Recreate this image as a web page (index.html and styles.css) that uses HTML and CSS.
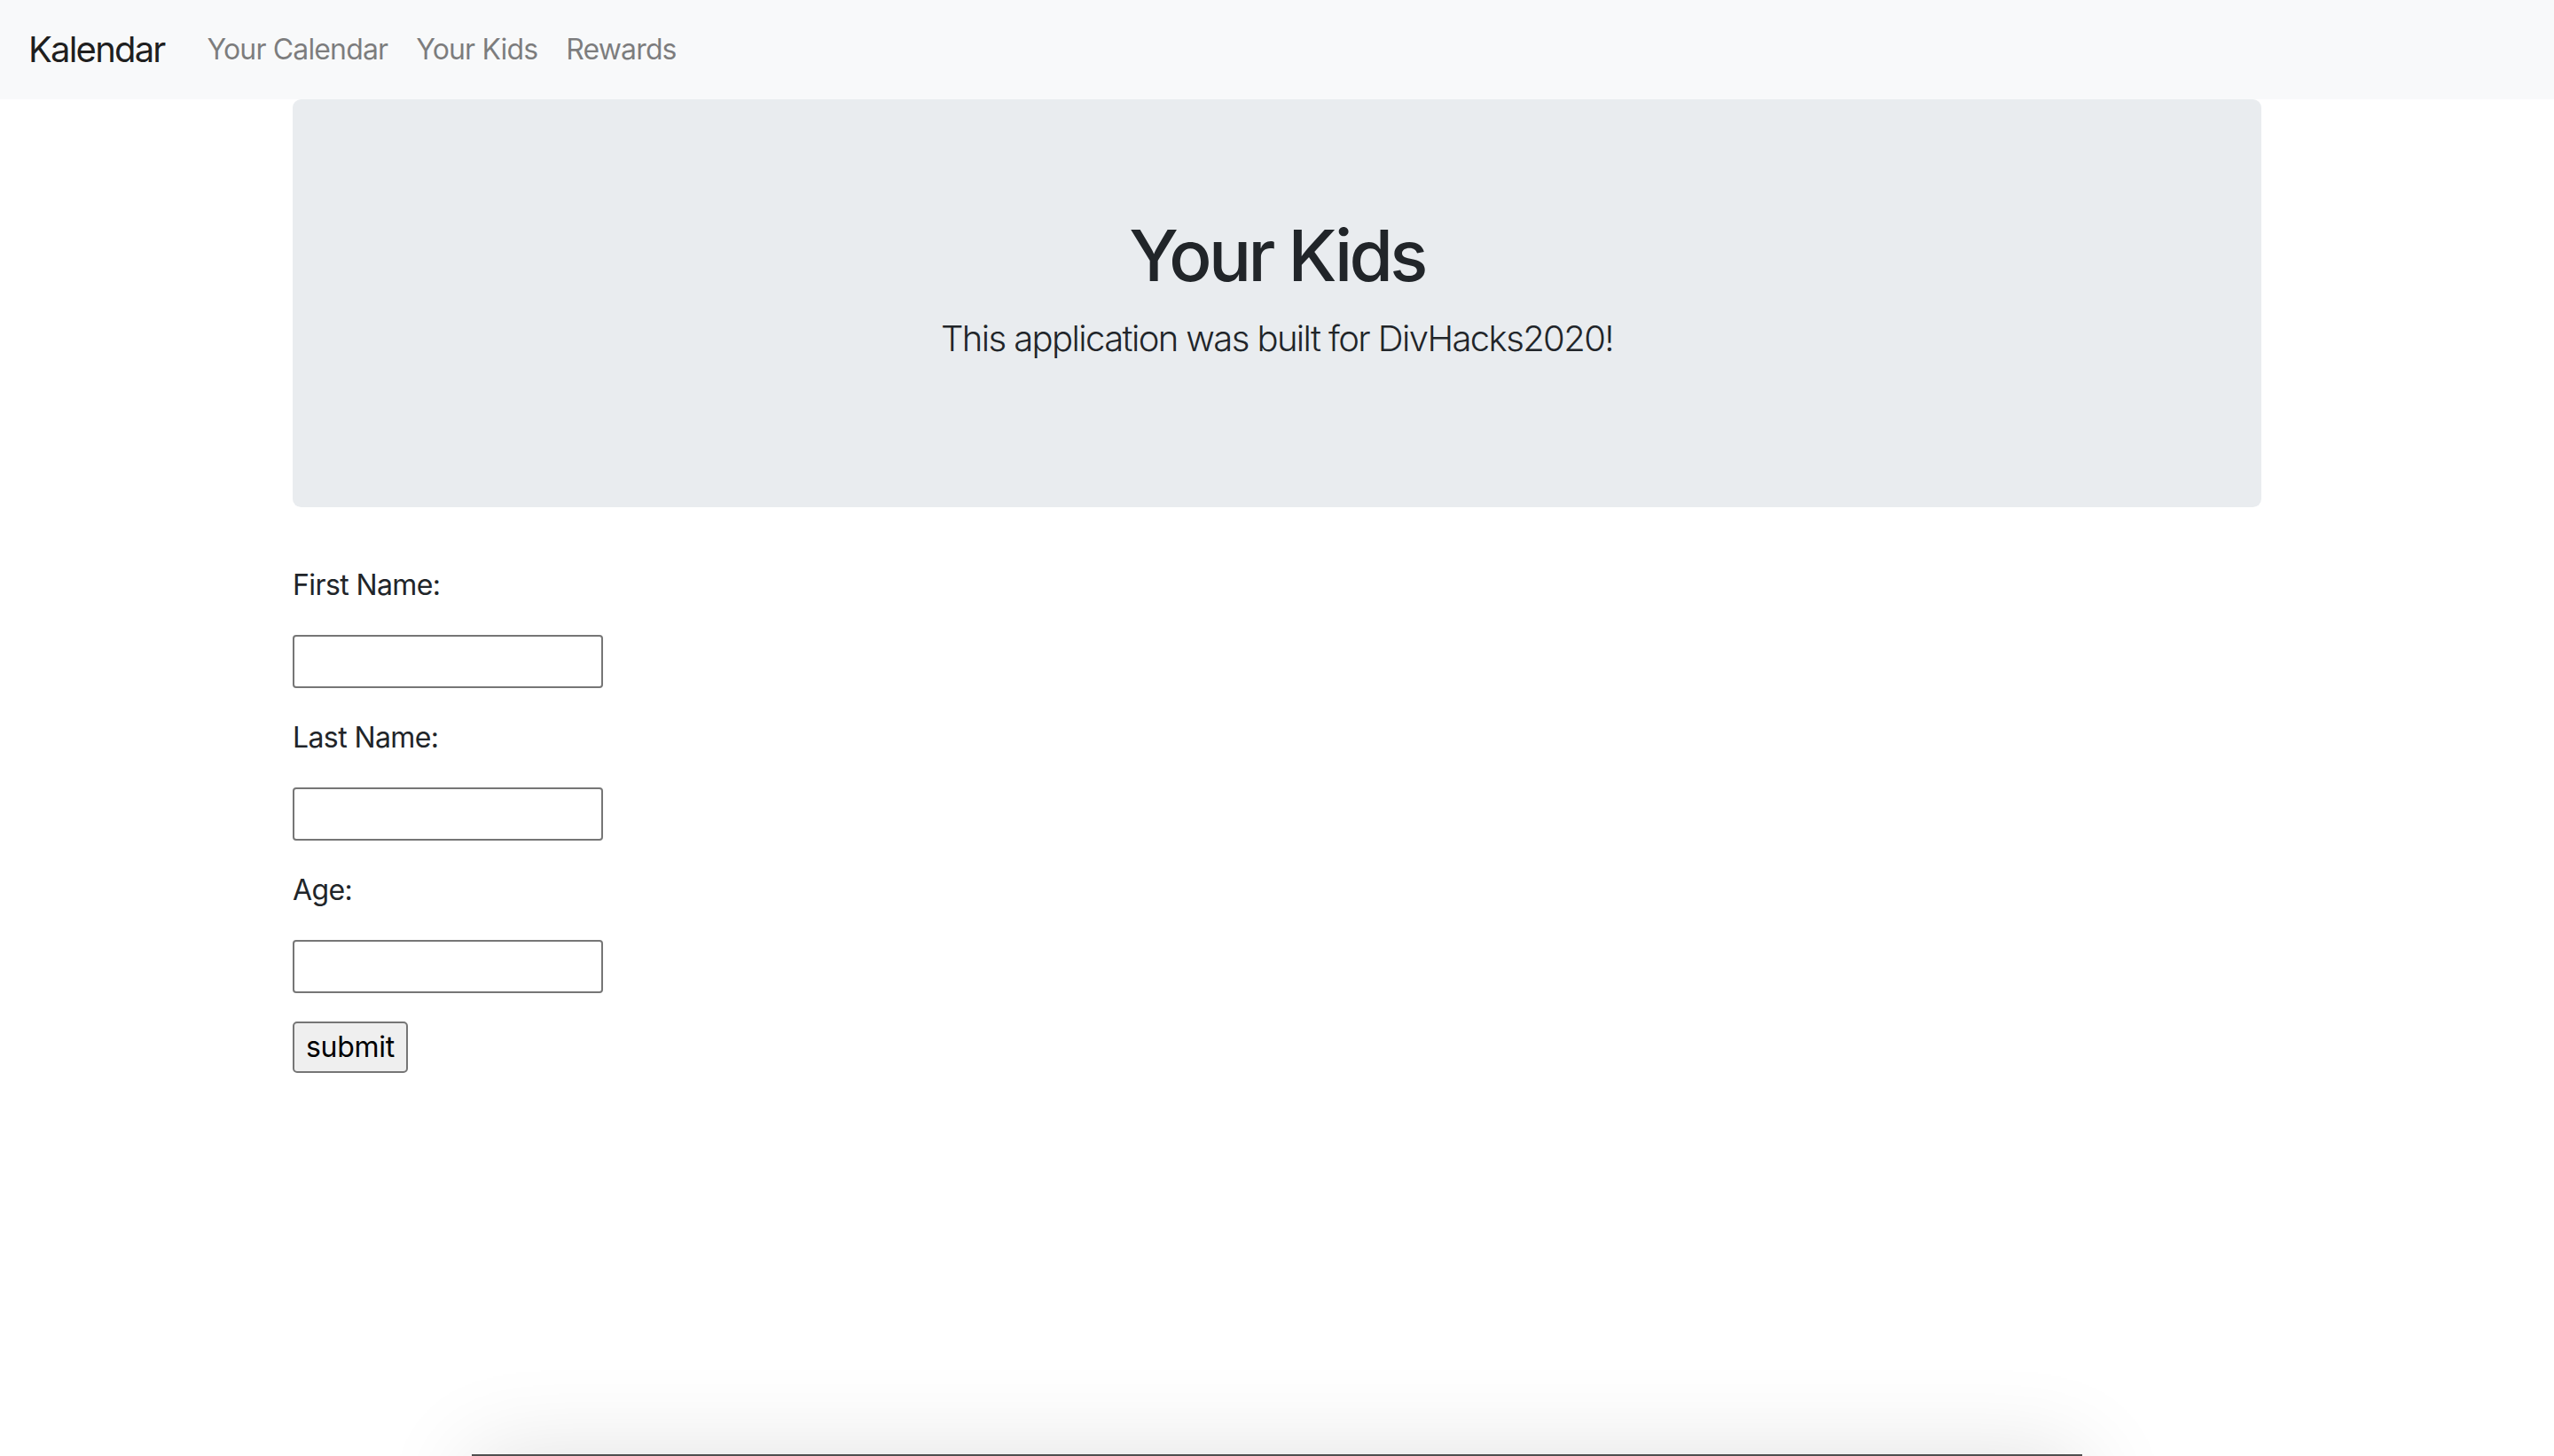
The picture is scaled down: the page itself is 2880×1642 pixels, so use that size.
FILE: index.html
```html
<!DOCTYPE html>
<html lang="en">
<head>
<meta charset="utf-8">
<title>Kalendar</title>
<link rel="stylesheet" href="styles.css">
</head>
<body>
<div class="page">
  <nav class="navbar">
    <a class="brand" href="#">Kalendar</a>
    <ul class="nav-links">
      <li><a class="nav-link" href="#">Your Calendar</a></li>
      <li><a class="nav-link" href="#">Your Kids</a></li>
      <li><a class="nav-link" href="#">Rewards</a></li>
    </ul>
  </nav>
  <main class="container">
    <section class="jumbotron">
      <h1 class="title">Your Kids</h1>
      <p class="lead">This application was built for DivHacks2020!</p>
    </section>
    <form class="kid-form">
      <label class="field-label" for="first">First Name:</label>
      <input class="field-input" id="first" type="text">
      <label class="field-label" for="last">Last Name:</label>
      <input class="field-input" id="last" type="text">
      <label class="field-label" for="age">Age:</label>
      <input class="field-input" id="age" type="text">
      <button class="submit-btn" type="button">submit</button>
    </form>
  </main>
  <div class="sheet"></div>
</div>
</body>
</html>
```

FILE: styles.css
```css
html, body {
  margin: 0;
  padding: 0;
}

body {
  font-family: Inter, "Noto Sans", "Liberation Sans", sans-serif;
  font-size: 32px;
  line-height: 1.5;
  color: #212529;
  background: #ffffff;
}

.page {
  display: flex;
  flex-direction: column;
  height: 100vh;
  overflow: hidden;
}

.navbar {
  flex-shrink: 0;
  display: flex;
  align-items: center;
  background: #f8f9fa;
  padding: 16px 32px;
}

.brand {
  font-size: 40px;
  line-height: 60px;
  padding: 10px 0;
  margin-right: 32px;
  color: rgba(0, 0, 0, 0.9);
  text-decoration: none;
  letter-spacing: -1.8px;
}

.nav-links {
  display: flex;
  list-style: none;
  margin: 0;
  padding: 0;
}

.nav-link {
  display: block;
  padding: 16px 16px;
  font-size: 32px;
  line-height: 48px;
  color: rgba(0, 0, 0, 0.5);
  text-decoration: none;
  letter-spacing: -0.85px;
}

.container {
  flex-shrink: 0;
  width: 2280px;
  box-sizing: border-box;
  margin: 0 auto;
  padding: 0 30px;
}

.jumbotron {
  background: #e9ecef;
  border-radius: 9.6px;
  padding: 128px 64px;
  margin-bottom: 64px;
  text-align: center;
}

.title {
  margin: 0 0 16px;
  font-size: 80px;
  font-weight: 500;
  line-height: 96px;
  letter-spacing: -3.6px;
}

.lead {
  margin: 0 0 32px;
  font-size: 40px;
  font-weight: 300;
  line-height: 60px;
  letter-spacing: -1.6px;
}

.kid-form {
  display: flex;
  flex-direction: column;
  align-items: flex-start;
  gap: 32px;
}

.field-label {
  display: block;
  font-size: 32px;
  line-height: 48px;
  letter-spacing: -0.6px;
}

.field-input {
  box-sizing: border-box;
  width: 350px;
  height: 60px;
  margin: 0;
  padding: 2px 4px;
  border: 2px solid #767676;
  border-radius: 4px;
  background: #ffffff;
  font: inherit;
}

.submit-btn {
  box-sizing: border-box;
  height: 58px;
  margin: 0;
  padding: 0 13px;
  border: 2px solid #767676;
  border-radius: 5px;
  background: #efefef;
  color: #000000;
  font-family: inherit;
  font-size: 32px;
  line-height: 48px;
  letter-spacing: -0.3px;
}

.sheet {
  position: relative;
  flex-shrink: 0;
  margin-top: auto;
  margin-left: auto;
  margin-right: auto;
  width: 1816px;
  height: 2px;
  background: #4f4f4f;
}

.sheet::after {
  content: "";
  position: absolute;
  left: 0;
  right: 0;
  top: 0;
  height: 600px;
  border-top: 2px solid #4f4f4f;
  background: #ffffff;
  box-shadow: 0 0 100px rgba(0, 0, 0, 0.12);
}
```
